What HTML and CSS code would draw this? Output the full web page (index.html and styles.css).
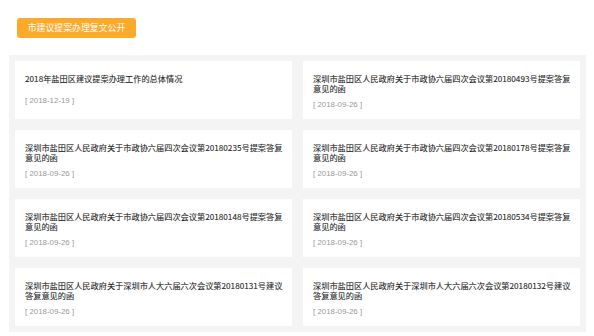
FILE: index.html
```html
<!DOCTYPE html>
<html lang="zh-CN">
<head>
    <meta charset="UTF-8">
    <meta name="viewport" content="width=device-width, initial-scale=1.0">
    <title>市建议提案办理复文公开</title>
    <link rel="stylesheet" href="styles.css">
</head>
<body>

    <div class="header">
        <a class="tag" href="#">市建议提案办理复文公开</a>
    </div>

    <div class="panel">
        <div class="list">
            <a class="card" href="#">
                <div class="title single">2018年盐田区建议提案办理工作的总体情况</div>
                <div class="date">[ 2018-12-19 ]</div>
            </a>
            <a class="card" href="#">
                <div class="title">深圳市盐田区人民政府关于市政协六届四次会议第20180493号提案答复意见的函</div>
                <div class="date">[ 2018-09-26 ]</div>
            </a>
            <a class="card" href="#">
                <div class="title">深圳市盐田区人民政府关于市政协六届四次会议第20180235号提案答复意见的函</div>
                <div class="date">[ 2018-09-26 ]</div>
            </a>
            <a class="card" href="#">
                <div class="title">深圳市盐田区人民政府关于市政协六届四次会议第20180178号提案答复意见的函</div>
                <div class="date">[ 2018-09-26 ]</div>
            </a>
            <a class="card" href="#">
                <div class="title">深圳市盐田区人民政府关于市政协六届四次会议第20180148号提案答复意见的函</div>
                <div class="date">[ 2018-09-26 ]</div>
            </a>
            <a class="card" href="#">
                <div class="title">深圳市盐田区人民政府关于市政协六届四次会议第20180534号提案答复意见的函</div>
                <div class="date">[ 2018-09-26 ]</div>
            </a>
            <a class="card" href="#">
                <div class="title">深圳市盐田区人民政府关于深圳市人大六届六次会议第20180131号建议答复意见的函</div>
                <div class="date">[ 2018-09-26 ]</div>
            </a>
            <a class="card" href="#">
                <div class="title">深圳市盐田区人民政府关于深圳市人大六届六次会议第20180132号建议答复意见的函</div>
                <div class="date">[ 2018-09-26 ]</div>
            </a>
        </div>
    </div>

</body>
</html>
```

FILE: styles.css
```css
* {
    margin: 0;
    padding: 0;
    box-sizing: border-box;
}

body {
    font-family: 'Noto Sans CJK SC', 'Noto Sans', sans-serif;
    background-color: #fff;
    color: #333;
}

a {
    text-decoration: none;
    color: inherit;
}

.header {
    display: flex;
    padding: 18px 0 17px 17px;
}

.tag {
    display: block;
    width: 119px;
    height: 20px;
    line-height: 20px;
    background-color: #fcaa2a;
    border-radius: 3px;
    color: #fff;
    font-size: 8.9px;
    text-align: center;
}

.panel {
    margin-left: 9px;
    width: 577px;
    background-color: #f4f4f4;
    padding: 6px 6px 6px 6px;
}

.list {
    display: grid;
    grid-template-columns: 277px 277px;
    column-gap: 11px;
    row-gap: 11px;
}

.card {
    display: block;
    height: 58px;
    background-color: #fff;
    padding: 12px 5px 0 10px;
}

.title {
    font-size: 8.2px;
    line-height: 10px;
    height: 20px;
    color: #222;
    -webkit-text-stroke: 0.08px #222;
}

.title.single {
    height: 16px;
}

.date {
    margin-top: 7px;
    font-family: 'Liberation Sans', Arial, sans-serif;
    font-size: 7.9px;
    line-height: 10px;
    color: #999;
}
```
